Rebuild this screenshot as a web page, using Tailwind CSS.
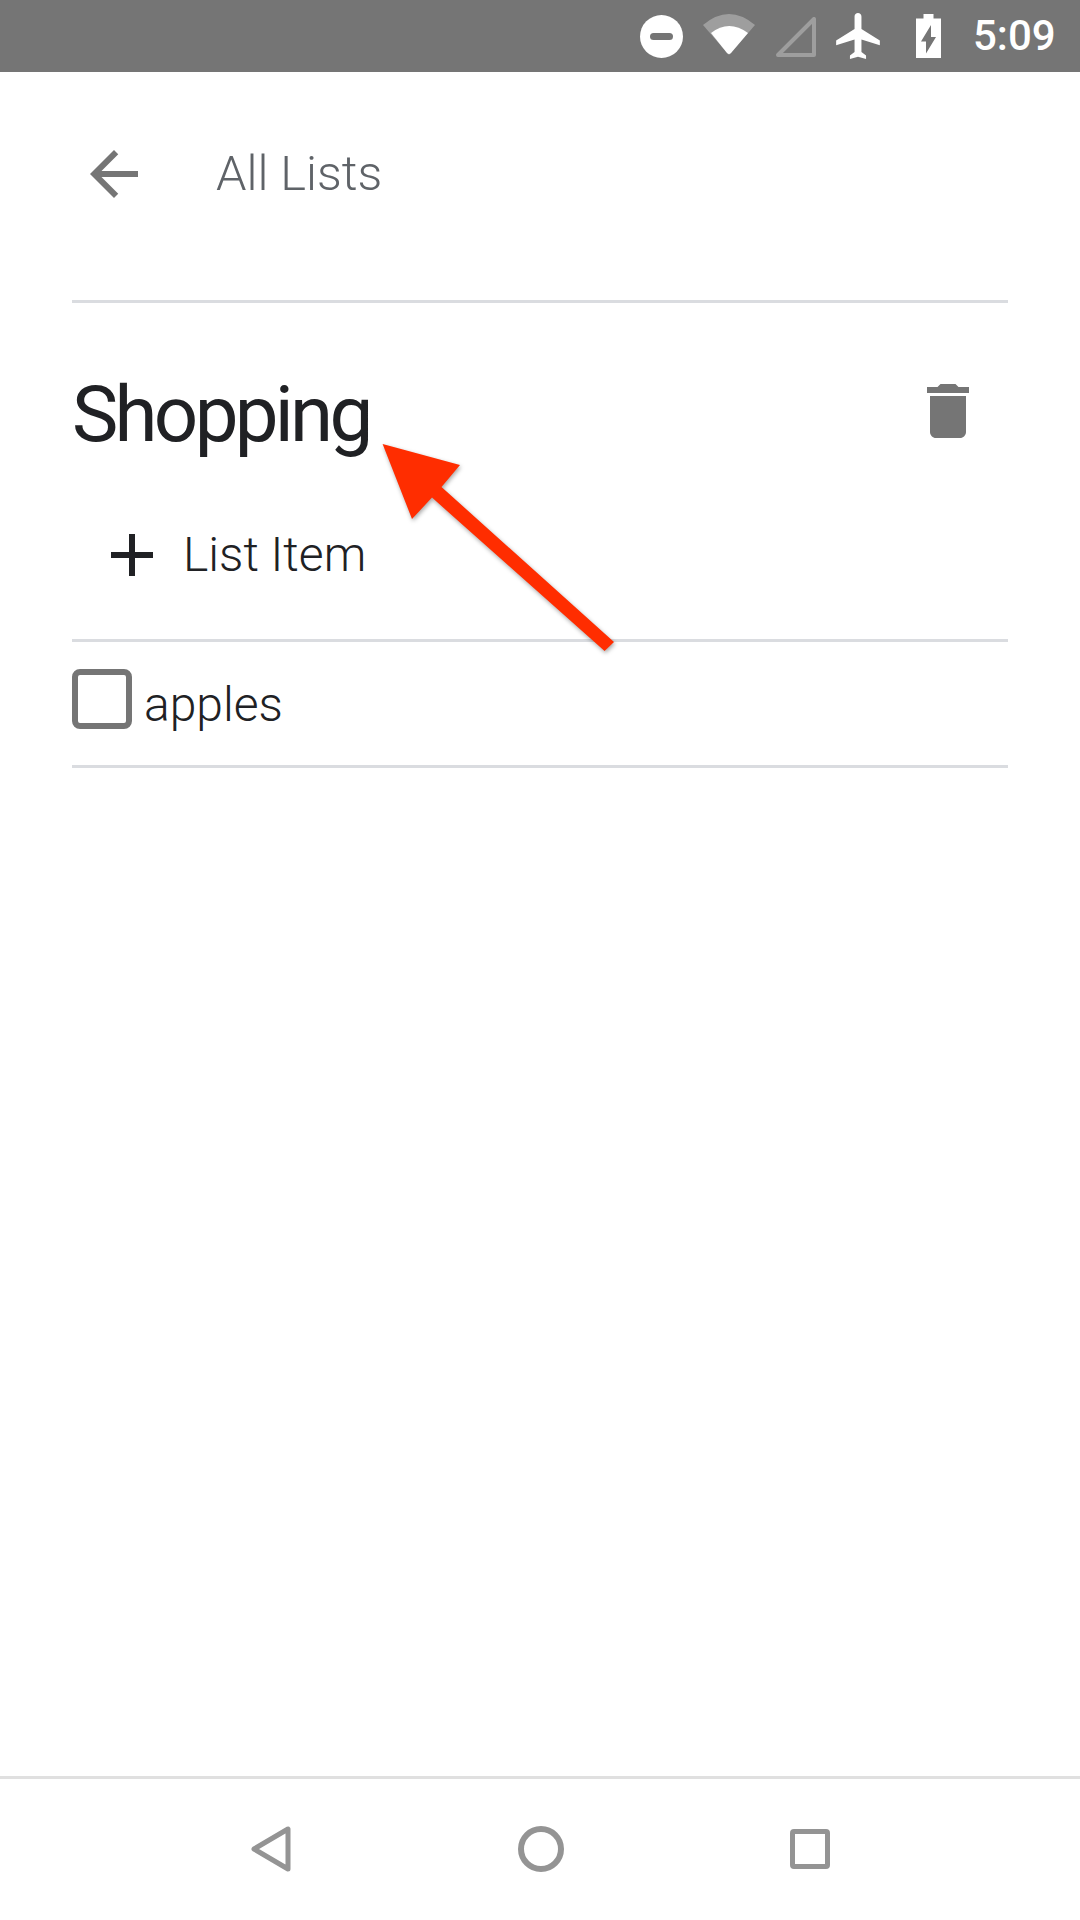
<!DOCTYPE html>
<html lang="en">
<head>
    <meta charset="UTF-8">
    <meta name="viewport" content="width=device-width, initial-scale=1.0">
    <title>Shopping</title>
    <script src="https://cdn.jsdelivr.net/npm/@tailwindcss/browser@4"></script>
</head>
<body class="bg-white font-['Roboto',sans-serif] text-[#202124]">
    <div class="relative w-[1080px] h-[1920px] flex flex-col overflow-hidden">
        <!-- status bar -->
        <div class="h-[72px] bg-[#757575] flex items-center justify-end pr-[25px] text-white">
            <svg class="w-[43px] h-[43px]" viewBox="0 0 43 43"><circle cx="21.5" cy="21.5" r="21.5" fill="#fff"/><rect x="10" y="18" width="23" height="7" rx="3.5" fill="#757575"/></svg>
            <svg class="w-[52px] h-[41px] ml-[20px] -mt-[3px]" viewBox="0 0 52 41"><path d="M0 11Q26 -11 52 11L26 41z" fill="#fff" fill-opacity=".3"/><path d="M8 19Q26 5 45 19L28 39Q26 41 24 39z" fill="#fff"/></svg>
            <svg class="w-[40px] h-[40px] ml-[21px] mt-[2px]" viewBox="0 0 40 40"><path d="M2 38L38 2V38z" fill="none" stroke="#fff" stroke-opacity=".3" stroke-width="4" stroke-linejoin="round"/></svg>
            <svg class="w-[44px] h-[46px] ml-[20px]" viewBox="2 2 19 20"><path fill="#fff" d="M21 16v-2l-8-5V3.500c0-.83-.67-1.500-1.500-1.500S10 2.670 10 3.500V9l-8 5v2l8-2.500V19l-2 1.500V22l3.500-1 3.500 1v-1.500L13 19v-5.500l8 2.500z"/></svg>
            <svg class="w-[25px] h-[44px] ml-[36px]" viewBox="7 2 10 20" preserveAspectRatio="none"><path fill="#fff" fill-rule="evenodd" d="M7 4h3V2h4v2h3v18H7zM11 20l4-7.500h-2V7l-4 7.500h2z"/></svg>
            <span class="ml-[34px] text-[42px] leading-none font-medium w-[80px] whitespace-nowrap -translate-x-[2px]">5:09</span>
        </div>

        <!-- page -->
        <main class="flex-1 px-[72px]">
            <header class="h-[228px] border-b-[3px] border-[#dadce0] box-content flex items-center text-[#5f6368]">
                <svg class="w-[48px] h-[48px] ml-[18px] -mt-[25px]" viewBox="4 4 16 16"><path fill="#757575" d="M20 11H7.830l5.590-5.590L12 4l-8 8 8 8 1.410-1.410L7.830 13H20v-2z"/></svg>
                <span class="ml-[78px] -mt-[24px] text-[48.8px] leading-none font-light">All Lists</span>
            </header>

            <section class="h-[336px] border-b-[3px] border-[#dadce0] box-content">
                <div class="flex items-start justify-between pt-[70px] pr-[39px]">
                    <h1 class="text-[78px] leading-[84px] -tracking-[3.7px]">Shopping</h1>
                    <svg class="w-[42px] h-[54px] mt-[11px]" viewBox="5 3 14 18"><path fill="#757575" d="M6 19c0 1.100.9 2 2 2h8c1.100 0 2-.9 2-2V7H6v12zM19 4h-3.500l-1-1h-5l-1 1H5v2h14V4z"/></svg>
                </div>
                <div class="flex items-center pl-[39px] mt-[74px]">
                    <svg class="w-[42px] h-[42px]" viewBox="5 5 14 14"><path fill="#202124" d="M19 13h-6v6h-2v-6H5v-2h6V5h2v6h6v2z"/></svg>
                    <span class="ml-[30px] text-[48px] leading-none font-light">List Item</span>
                </div>
            </section>

            <section class="h-[123px] border-b-[3px] border-[#dadce0] box-content flex items-center">
                <span class="w-[60px] h-[60px] border-[6px] border-[#757575] rounded-[8px] -mt-[9px]"></span>
                <span class="ml-[12px] mt-[2px] text-[48px] leading-none font-light">apples</span>
            </section>
        </main>

        <!-- nav bar -->
        <nav class="h-[144px] border-t-[3px] border-[#e0e0e0] flex items-center text-[#949494]">
            <svg class="w-[40px] h-[46px] ml-[251px] -mt-[2px]" viewBox="0 0 40 46"><path d="M37 3V43L3 23z" fill="none" stroke="#949494" stroke-width="5" stroke-linejoin="round"/></svg>
            <svg class="w-[46px] h-[46px] ml-[227px] -mt-[2px]" viewBox="0 0 46 46"><circle cx="23" cy="23" r="20" fill="none" stroke="#949494" stroke-width="6"/></svg>
            <svg class="w-[40px] h-[40px] ml-[226px] -mt-[2px]" viewBox="0 0 40 40"><rect x="2.500" y="2.500" width="35" height="35" rx="1.500" fill="none" stroke="#949494" stroke-width="5"/></svg>
        </nav>

        <!-- annotation arrow -->
        <svg class="absolute left-0 top-0 w-[1080px] h-[1920px] pointer-events-none drop-shadow-[1px_2px_2px_rgba(0,0,0,0.35)]" viewBox="0 0 1080 1920"><path fill="#ff2d00" d="M382.600 444L460 465 441.500 487 614 642 604.600 651 432 497.600 412 519z"/></svg>
    </div>
</body>
</html>
